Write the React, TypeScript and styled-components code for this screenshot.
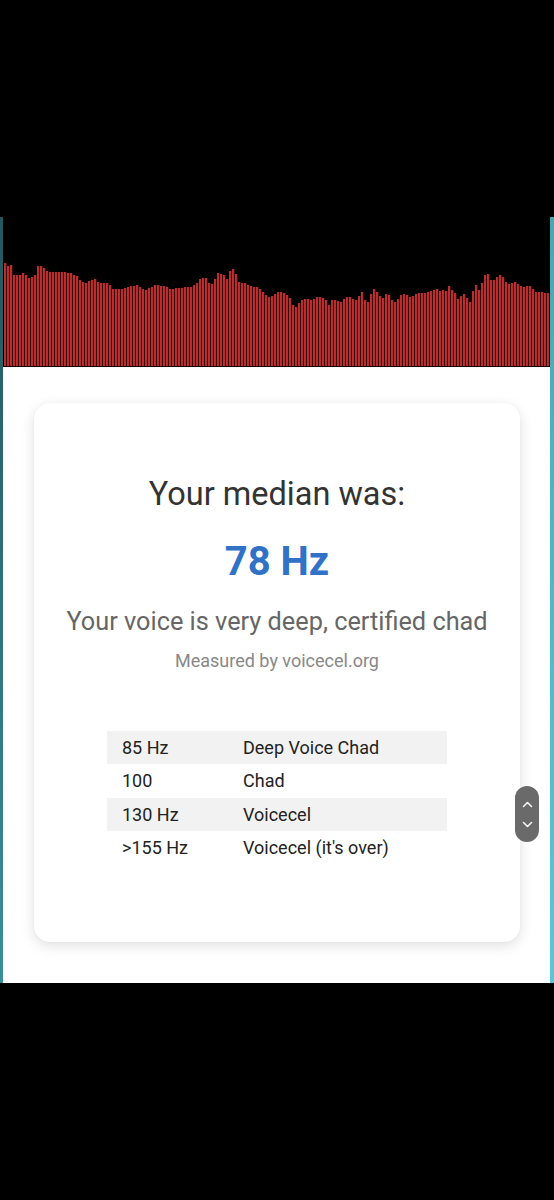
import React from "react";
import styled, { createGlobalStyle } from "styled-components";

const GlobalStyle = createGlobalStyle`
  html, body { margin: 0; padding: 0; background: #000; }
  body { font-family: Roboto, "Noto Sans", Arial, sans-serif; }
  * { box-sizing: border-box; }
`;

const tops = [
  263,266,265,275,275,275,273,275,278,277,275,266,266,268,271,272,272,272,272,272,272,273,273,275,276,280,282,283,281,280,279,282,283,283,283,285,289,289,289,289,288,287,286,286,285,287,289,290,288,287,285,285,286,286,287,289,289,288,288,288,287,287,287,285,283,279,278,278,283,284,279,273,274,275,279,271,269,274,282,283,283,285,286,287,287,289,292,295,297,296,294,292,292,293,295,298,305,307,303,300,299,299,300,299,297,297,298,300,305,300,300,301,302,299,297,297,299,300,296,292,300,302,294,289,292,296,298,294,295,300,302,299,295,294,295,297,296,294,293,293,293,292,291,290,289,291,290,291,286,290,293,299,296,294,298,302,291,285,290,283,275,274,280,280,277,275,277,282,284,283,282,284,286,287,286,286,289,292,292,292,293,293,
];

const Page = styled.div`
  width: 554px;
  min-height: 1200px;
  display: flex;
  flex-direction: column;
  background: #000;
`;

const BlackBand = styled.div<{ $h: number }>`
  height: ${(p) => p.$h}px;
  background: #000;
  flex-shrink: 0;
`;

const Frame = styled.div`
  display: flex;
  height: 766px;
`;

const Edge = styled.div<{ $w: number; $from: string; $to: string }>`
  width: ${(p) => p.$w}px;
  flex-shrink: 0;
  background: linear-gradient(to bottom, ${(p) => p.$from}, ${(p) => p.$to});
`;

const Screen = styled.div`
  flex: 1;
  display: flex;
  flex-direction: column;
  min-width: 0;
`;

const Visualizer = styled.div`
  height: 150px;
  background: #000;
  display: flex;
  align-items: flex-end;
  padding-left: 1px;
  border-bottom: 1px solid #1a0404;
`;

const Bar = styled.div`
  width: 3px;
  flex-shrink: 0;
  background: linear-gradient(
    to right,
    #7a1616 0,
    #b8302f 0.5px,
    #b52e2e 1.5px,
    #8a1a1a 2px,
    #3a0808 2px,
    #3a0808 3px
  );
`;

const Panel = styled.div`
  position: relative;
  flex: 1;
  background: #fff;
  padding: 36px 30px 0 31px;
`;

const Card = styled.div`
  height: 539px;
  background: #fff;
  border-radius: 16px;
  box-shadow: 0 4px 14px rgba(0, 0, 0, 0.12), 0 0 3px rgba(0, 0, 0, 0.04);
  display: flex;
  flex-direction: column;
  align-items: center;
  padding-top: 72px;
`;

const Heading = styled.div`
  font-size: 32.5px;
  color: #333;
  line-height: 38px;
`;

const Value = styled.div`
  margin-top: 25px;
  font-size: 40px;
  font-weight: 700;
  color: #2f72c6;
  line-height: 47px;
`;

const Verdict = styled.div`
  margin-top: 22px;
  font-size: 25.3px;
  color: #666;
  line-height: 30px;
  white-space: nowrap;
`;

const Credit = styled.div`
  margin-top: 13px;
  font-size: 18px;
  color: #888;
  line-height: 21px;
`;

const Table = styled.div`
  margin-top: 60px;
  width: 340px;
  display: flex;
  flex-direction: column;
`;

const Row = styled.div<{ $shade: boolean }>`
  display: grid;
  grid-template-columns: 136px 1fr;
  height: 33.3px;
  align-items: center;
  background: ${(p) => (p.$shade ? "#f2f2f2" : "transparent")};
  font-size: 18px;
  color: #222;
`;

const Cell = styled.div<{ $first?: boolean }>`
  padding-left: ${(p) => (p.$first ? "15px" : "0")};
  white-space: nowrap;
`;

const ScrollPill = styled.div`
  position: absolute;
  top: 419px;
  right: 11px;
  width: 24px;
  height: 56px;
  border-radius: 12px;
  background: #6a6a6a;
  display: flex;
  flex-direction: column;
  align-items: center;
  justify-content: center;
  gap: 13px;
`;

const Chevron = ({ up }: { up?: boolean }) => (
  <svg width="11" height="7" viewBox="0 0 11 7">
    <path
      d={up ? "M1.5 5.5 L5.5 1.5 L9.5 5.5" : "M1.5 1.5 L5.5 5.5 L9.5 1.5"}
      fill="none"
      stroke="#f4f4f4"
      strokeWidth="1.6"
      strokeLinecap="round"
      strokeLinejoin="round"
    />
  </svg>
);

const rows: [string, string][] = [
  ["85 Hz", "Deep Voice Chad"],
  ["100", "Chad"],
  ["130 Hz", "Voicecel"],
  [">155 Hz", "Voicecel (it's over)"],
];

export default function App() {
  return (
    <>
      <GlobalStyle />
      <Page>
        <BlackBand $h={217} />
        <Frame>
          <Edge $w={3} $from="#24575e" $to="#3a8e98" />
          <Screen>
            <Visualizer>
              {tops.map((t, i) => (
                <Bar key={i} style={{ height: `${366 - t}px` }} />
              ))}
            </Visualizer>
            <Panel>
              <Card>
                <Heading>Your median was:</Heading>
                <Value>78 Hz</Value>
                <Verdict>Your voice is very deep, certified chad</Verdict>
                <Credit>Measured by voicecel.org</Credit>
                <Table>
                  {rows.map(([a, b], i) => (
                    <Row key={i} $shade={i % 2 === 0}>
                      <Cell $first>{a}</Cell>
                      <Cell>{b}</Cell>
                    </Row>
                  ))}
                </Table>
              </Card>
              <ScrollPill>
                <Chevron up />
                <Chevron />
              </ScrollPill>
            </Panel>
          </Screen>
          <Edge $w={4} $from="#45a9b2" $to="#5cc6d4" />
        </Frame>
        <BlackBand $h={217} />
      </Page>
    </>
  );
}
